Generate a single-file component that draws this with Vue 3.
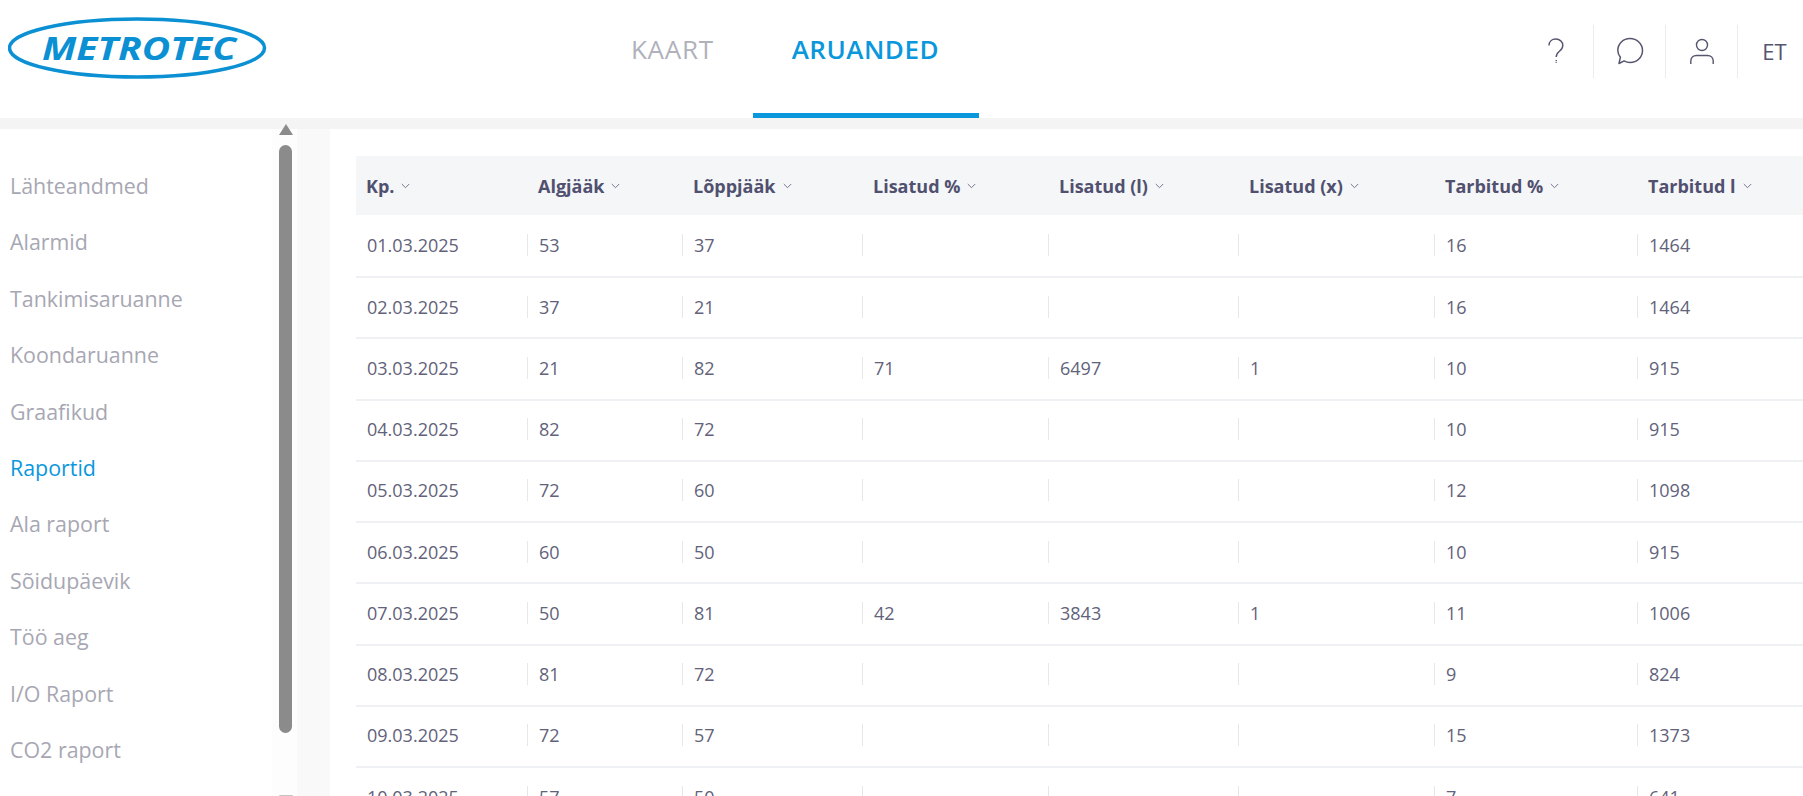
<script setup>
const menu = ['Lähteandmed','Alarmid','Tankimisaruanne','Koondaruanne','Graafikud','Raportid','Ala raport','Sõidupäevik','Töö aeg','I/O Raport','CO2 raport']
const cols = ['Kp.','Algjääk','Lõppjääk','Lisatud %','Lisatud (l)','Lisatud (x)','Tarbitud %','Tarbitud l']
const rows = [
 ['01.03.2025','53','37','','','','16','1464'],
 ['02.03.2025','37','21','','','','16','1464'],
 ['03.03.2025','21','82','71','6497','1','10','915'],
 ['04.03.2025','82','72','','','','10','915'],
 ['05.03.2025','72','60','','','','12','1098'],
 ['06.03.2025','60','50','','','','10','915'],
 ['07.03.2025','50','81','42','3843','1','11','1006'],
 ['08.03.2025','81','72','','','','9','824'],
 ['09.03.2025','72','57','','','','15','1373'],
 ['10.03.2025','57','50','','','','7','641'],
]
</script>

<template>
  <div class="page">
    <header class="top">
      <div class="logo">
        <svg width="270" height="66" viewBox="0 0 270 66">
          <ellipse cx="129" cy="33" rx="127.5" ry="29" fill="none" stroke="#0a90d3" stroke-width="3.5" />
          <text x="34" y="45" textLength="194" lengthAdjust="spacingAndGlyphs" class="logo-text">METROTEC</text>
        </svg>
      </div>
      <nav class="nav">
        <a class="tab">KAART</a>
        <a class="tab active">ARUANDED</a>
      </nav>
      <div class="actions">
        <div class="act act-help">
          <svg width="20" height="30" viewBox="0 0 20 30" fill="none" stroke="#55556f" stroke-width="1.4">
            <path d="M3 9.5C3 5.5 6 3 9.8 3c4 0 7 2.8 7 6.5 0 3-1.8 4.6-3.6 6-1.7 1.3-3 2.7-3 5.6" />
            <path d="M10.2 24v3" stroke-dasharray="1.2 1" />
          </svg>
        </div>
        <div class="act">
          <svg width="30" height="30" viewBox="0 0 30 30" fill="none" stroke="#55556f" stroke-width="1.5">
            <path d="M4 27.5l1.4-6.3C3.6 18.900 2.800 16.600 2.800 14.500 2.800 7.900 8.200 2.500 15 2.500s12.500 5.400 12.500 12-5.500 12-12.500 12c-2.200 0-4.200-.6-5.900-1.600z" stroke-linejoin="round" />
          </svg>
        </div>
        <div class="act act-user">
          <svg width="30" height="30" viewBox="0 0 30 30" fill="none" stroke="#55556f" stroke-width="1.4">
            <circle cx="15" cy="8" r="5.500" />
            <path d="M3.800 27v-3c0-3.300 2.400-5.500 5.700-5.500h11c3.300 0 5.700 2.200 5.700 5.500v3" />
          </svg>
        </div>
        <div class="act lang">ET</div>
      </div>
    </header>
    <div class="band"></div>
    <div class="body">
      <aside class="side">
        <ul class="menu">
          <li v-for="m in menu" :key="m" :class="{ on: m === 'Raportid' }">{{ m }}</li>
        </ul>
      </aside>
      <div class="scroll">
        <span class="arrow"></span>
        <span class="thumb"></span>
        <span class="arrow down"></span>
      </div>
      <div class="gutter"></div>
      <main class="main">
        <table class="tbl">
          <colgroup>
            <col style="width:171px" /><col style="width:155px" /><col style="width:180px" /><col style="width:186px" />
            <col style="width:190px" /><col style="width:196px" /><col style="width:203px" /><col style="width:170px" />
          </colgroup>
          <thead>
            <tr>
              <th v-for="c in cols" :key="c">
                <span class="th-in">{{ c }}
                  <svg class="caret" width="9" height="6" viewBox="0 0 9 6" fill="none" stroke="#77778c" stroke-width="1"><path d="M.8 1l3.700 3.700L8.200 1" /></svg>
                </span>
              </th>
            </tr>
          </thead>
          <tbody>
            <tr v-for="r in rows" :key="r[0]">
              <td v-for="(v, i) in r" :key="i" :class="{ first: i === 0 }"><span class="cell">{{ v }}</span></td>
            </tr>
          </tbody>
        </table>
      </main>
    </div>
  </div>
</template>

<style>
html, body { margin: 0; overflow: hidden; background: #fff; }
</style>

<style scoped>
.page {
  width: 1803px; height: 796px; overflow: hidden; display: flex; flex-direction: column;
  font-family: "Open Sans", sans-serif; color: #5b5b75; background: #fff;
}
.top { height: 118px; display: flex; flex: none; }
.logo { width: 592px; padding: 15px 0 0 8px; box-sizing: border-box; flex: none; }
.logo-text { font-family: "Open Sans", sans-serif; font-weight: 700; font-style: italic; font-size: 33px; fill: #0a90d3; }
.nav { display: flex; }
.tab {
  box-sizing: border-box; height: 118px; padding: 31px 39px 0; font-size: 26px; line-height: 36px;
  color: #b1b1bb; letter-spacing: .7px; white-space: nowrap;
}
.tab.active { color: #0a97dc; font-weight: 600; border-bottom: 5px solid #0a97dc; letter-spacing: .5px; padding-right: 40px; }
.actions { margin-left: auto; display: flex; align-items: flex-start; padding-top: 25px; }
.act { width: 72px; height: 53px; box-sizing: border-box; border-left: 1px solid #ececef; display: flex; align-items: center; justify-content: center; padding-bottom: 1px; }
.act-help { border-left: none; width: 74px; }
.act-user { padding-bottom: 0; padding-top: 1px; }
.lang { width: 66px; font-size: 22px; color: #55556f; padding: 0 0 2px 8px; }
.band { height: 11px; background: #f4f4f4; flex: none; }
.body { flex: 1; display: flex; min-height: 0; }
.side { width: 272px; flex: none; }
.menu { list-style: none; margin: 0; padding: 29px 0 0 10px; }
.menu li { height: 56.4px; line-height: 56.4px; font-size: 21.4px; color: #a7a7b3; white-space: nowrap; }
.menu li.on { color: #0a97dc; }
.scroll { width: 25px; flex: none; background: #fdfdfd; display: flex; flex-direction: column; align-items: center; padding-left: 2px; box-sizing: border-box; }
.arrow { width: 0; height: 0; border-left: 7px solid transparent; border-right: 7px solid transparent; border-bottom: 11px solid #8b8b8b; margin-top: -5px; flex: none; }
.arrow.down { border-bottom: none; border-top: 11px solid #c4c4c4; margin-top: 62px; }
.thumb { width: 13px; height: 588px; margin-top: 10px; border-radius: 7px; background: #8b8b8b; flex: none; }
.gutter { width: 33px; flex: none; background: #f9f9f9; }
.main { flex: 1; min-width: 0; padding: 27px 0 0 26px; overflow: hidden; }
.tbl { border-collapse: separate; border-spacing: 0; table-layout: fixed; width: 1451px; }
th { height: 59px; background: #f5f6f8; text-align: left; padding: 0 0 0 11px; font-size: 18px; font-weight: 700; color: #50506f; white-space: nowrap; }
th:first-child { padding-left: 10px; }
.th-in { display: inline-flex; align-items: center; gap: 7px; }
.caret { margin-top: 1px; }
td { height: 57.25px; border-bottom: 2px solid #eff0f3; padding: 0 0 2px; font-size: 18px; color: #62627a; }
tbody tr:first-child td { height: 59px; }
.cell { display: block; height: 22px; line-height: 22px; border-left: 1px solid #e6e7ea; padding-left: 11px; }
td.first .cell { border-left: none; padding-left: 11px; }
</style>
